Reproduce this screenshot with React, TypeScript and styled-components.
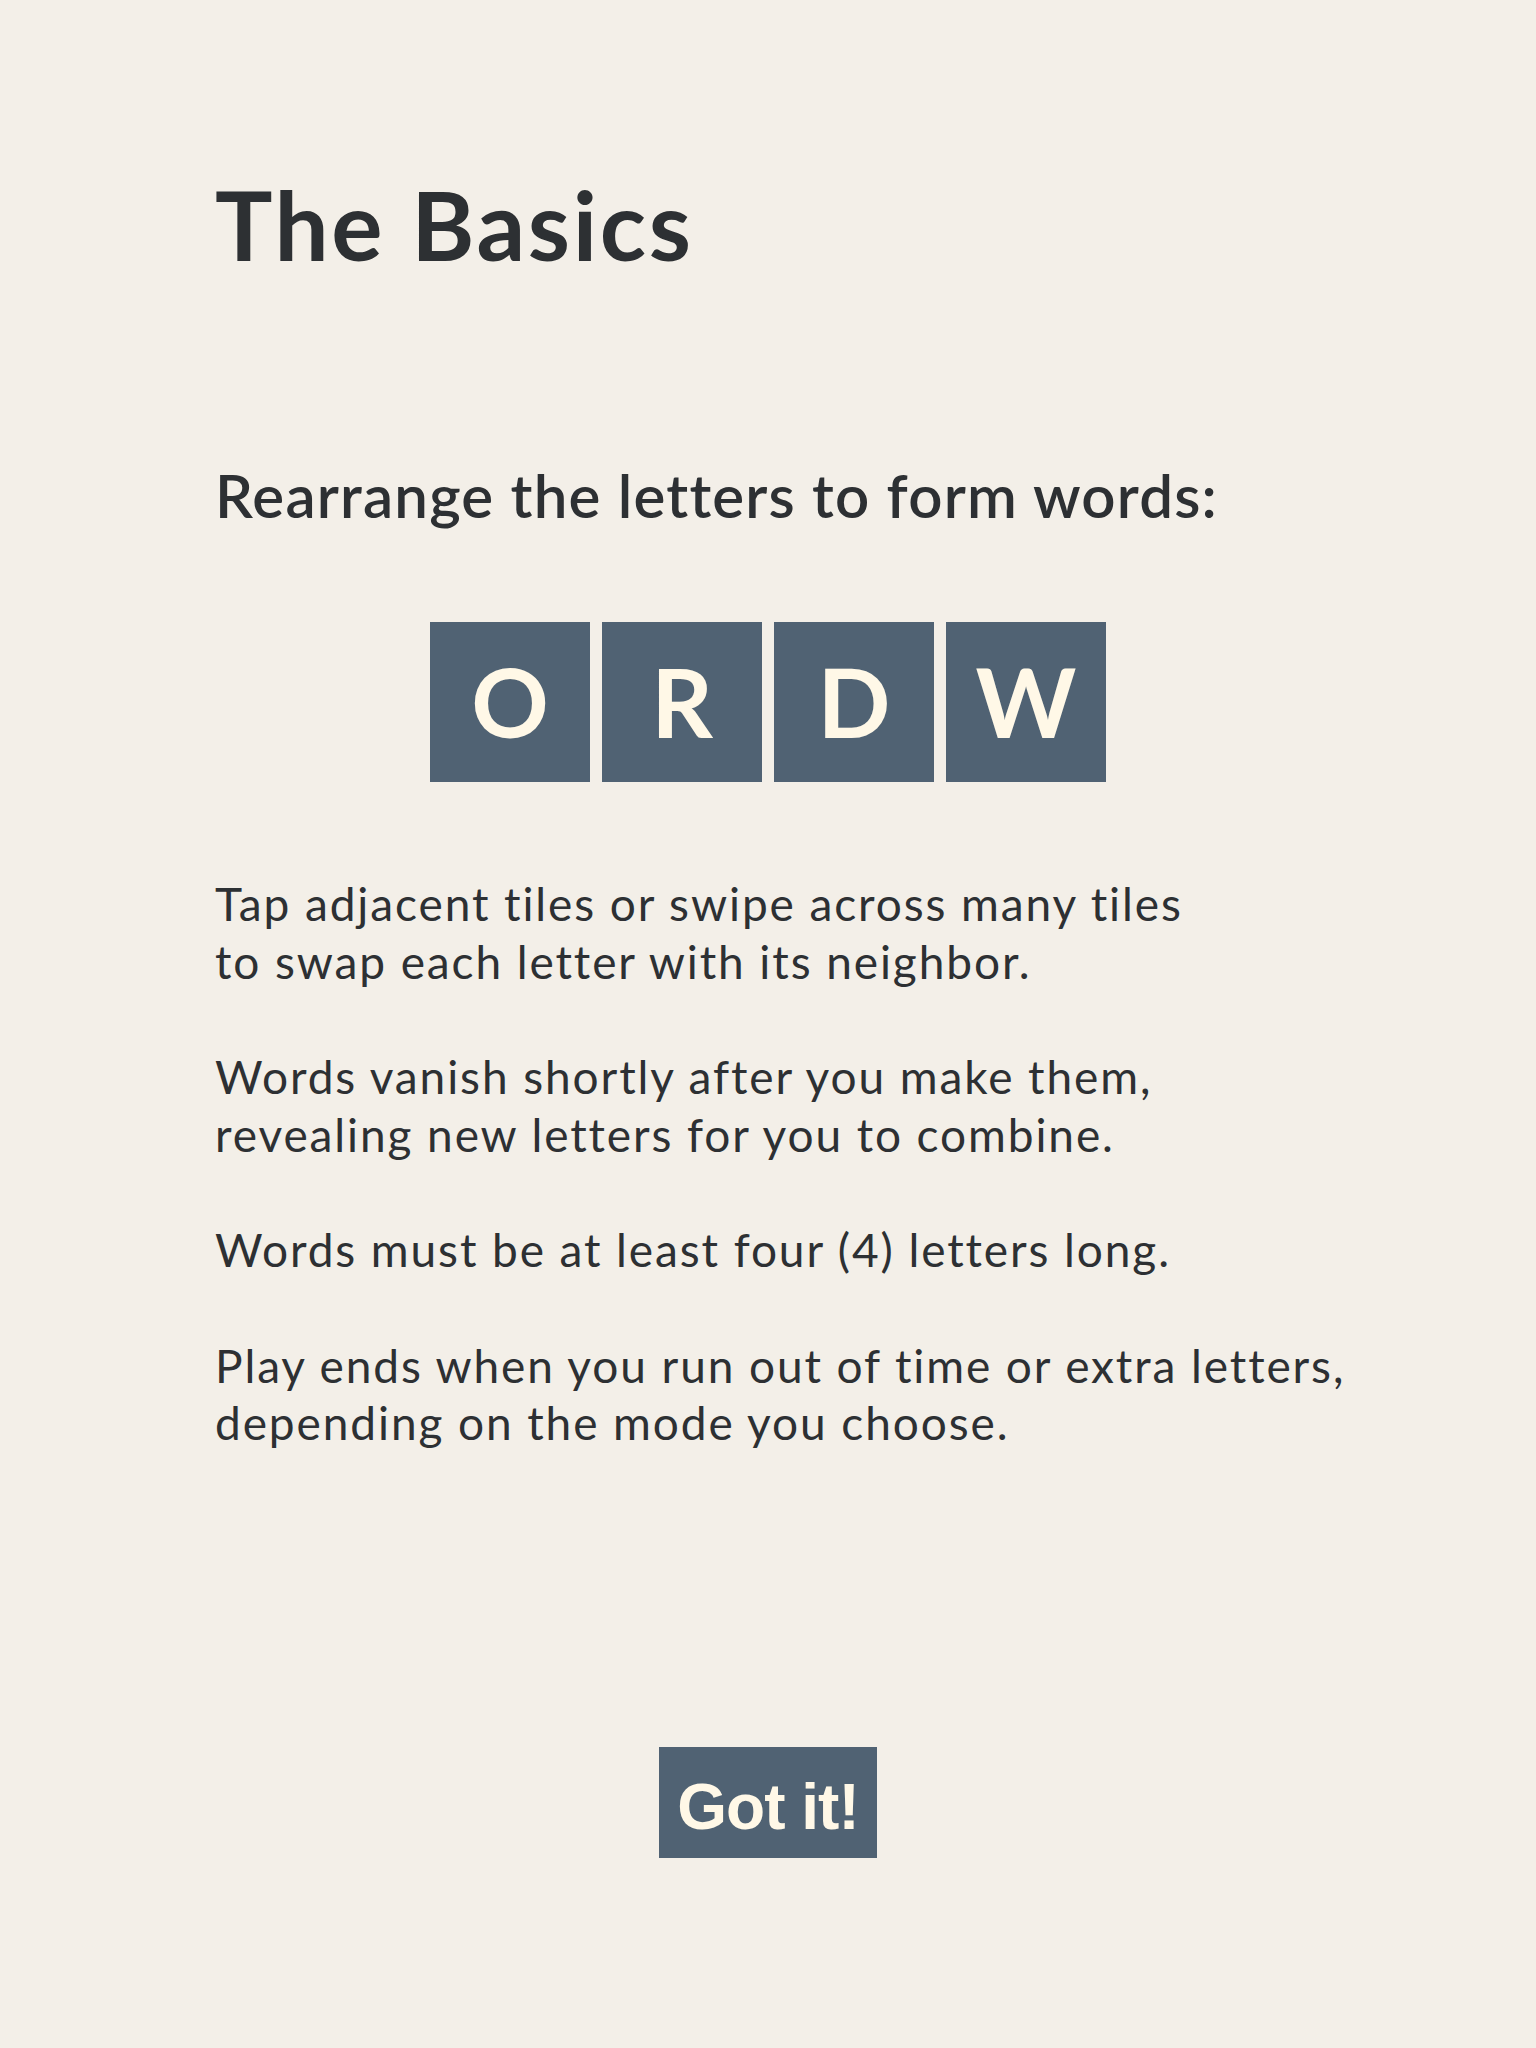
import React from "react";
import styled, { createGlobalStyle } from "styled-components";

const GlobalStyle = createGlobalStyle`
  html, body {
    margin: 0;
    padding: 0;
    background: #f3efe8;
  }
  * { box-sizing: border-box; }
`;

const Page = styled.main`
  min-height: 2048px;
  display: flex;
  flex-direction: column;
  padding-top: 176px;
  background: #f3efe8;
  color: #2d3033;
  font-family: Lato, "Open Sans", sans-serif;
  font-variant-ligatures: none;
  font-feature-settings: "liga" 0, "clig" 0;
`;

const Title = styled.h1`
  margin: 0 0 0 215px;
  font-size: 96px;
  line-height: 96px;
  font-weight: 700;
  letter-spacing: 2.7px;
`;

const Subtitle = styled.h2`
  margin: 193px 0 0 215px;
  font-size: 60px;
  line-height: 60px;
  font-weight: 600;
  letter-spacing: 1.2px;
`;

const TileRow = styled.div`
  display: flex;
  justify-content: center;
  gap: 12px;
  margin-top: 97px;
`;

const Tile = styled.div`
  width: 160px;
  height: 160px;
  padding-bottom: 3px;
  background: #506273;
  color: #fff8e7;
  display: flex;
  align-items: center;
  justify-content: center;
  font-size: 96px;
  line-height: 160px;
  font-weight: 700;
`;

const Body = styled.div`
  margin: 93px 0 0 215px;
  display: flex;
  flex-direction: column;
  gap: 57.7px;
`;

const Paragraph = styled.p`
  margin: 0;
  font-size: 46px;
  line-height: 57.7px;
  font-weight: 400;
  letter-spacing: 1.9px;
  white-space: nowrap;
`;

const ButtonRow = styled.div`
  display: flex;
  justify-content: center;
  margin-top: 295px;
`;

const GotIt = styled.button`
  height: 111px;
  padding: 10px 18px 0;
  border: none;
  border-radius: 0;
  background: #506273;
  color: #fff8e7;
  font-family: "Liberation Sans", Arial, sans-serif;
  font-weight: 700;
  font-size: 64px;
  line-height: 101px;
  letter-spacing: -1px;
  cursor: pointer;
`;

const letters = ["O", "R", "D", "W"];

const paragraphs: string[][] = [
  ["Tap adjacent tiles or swipe across many tiles", "to swap each letter with its neighbor."],
  ["Words vanish shortly after you make them,", "revealing new letters for you to combine."],
  ["Words must be at least four (4) letters long."],
  ["Play ends when you run out of time or extra letters,", "depending on the mode you choose."],
];

export default function App() {
  return (
    <>
      <GlobalStyle />
      <Page>
        <Title>The Basics</Title>
        <Subtitle>Rearrange the letters to form words:</Subtitle>
        <TileRow>
          {letters.map((l) => (
            <Tile key={l}>{l}</Tile>
          ))}
        </TileRow>
        <Body>
          {paragraphs.map((lines, i) => (
            <Paragraph key={i}>
              {lines.map((line, j) => (
                <React.Fragment key={j}>
                  {line}
                  {j < lines.length - 1 && <br />}
                </React.Fragment>
              ))}
            </Paragraph>
          ))}
        </Body>
        <ButtonRow>
          <GotIt type="button">Got it!</GotIt>
        </ButtonRow>
      </Page>
    </>
  );
}
